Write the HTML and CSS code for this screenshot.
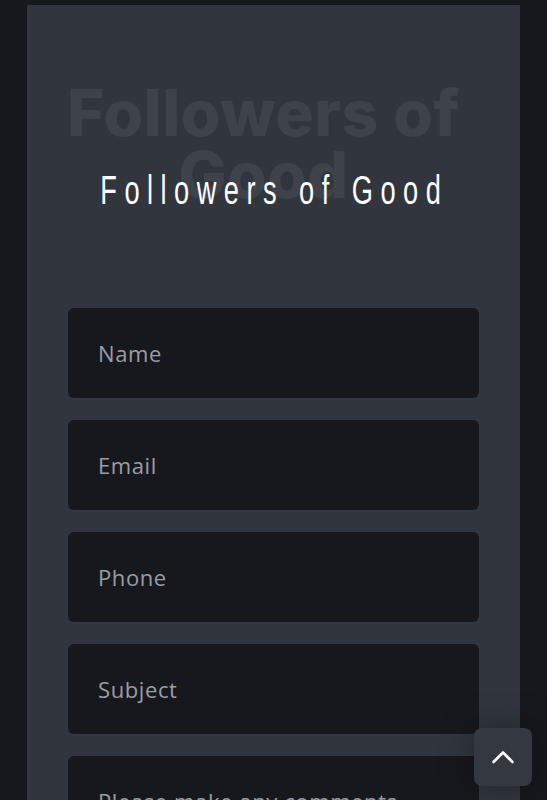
FILE: index.html
```html
<!DOCTYPE html>
<html lang="en">
<head>
    <meta charset="UTF-8">
    <meta name="viewport" content="width=device-width, initial-scale=1.0">
    <title>Followers of Good</title>
    <link rel="stylesheet" href="styles.css">
</head>
<body>

    <div class="page">
        <section class="contact">
            <div class="heading">
                <p class="heading-ghost">Followers of Good</p>
                <h2 class="heading-title"><span>Followers of Good</span></h2>
            </div>

            <form class="contact-form">
                <input type="text" class="field" placeholder="Name">
                <input type="email" class="field" placeholder="Email">
                <input type="tel" class="field" placeholder="Phone">
                <input type="text" class="field" placeholder="Subject">
                <textarea class="field field-message" placeholder="Please make any comments"></textarea>
            </form>
        </section>
    </div>

    <a href="#" class="to-top" aria-label="Back to top">
        <svg width="24" height="14" viewBox="0 0 24 14">
            <path d="M2.5 12 L12 2.5 L21.5 12" fill="none" stroke="#fff" stroke-width="2.6" stroke-linecap="round" stroke-linejoin="round"/>
        </svg>
    </a>

</body>
</html>
```

FILE: styles.css
```css
body {
    margin: 0;
    padding: 0;
    background-color: #15181d;
    font-family: "Open Sans", Arial, sans-serif;
}

.page {
    padding: 5px 27px 0 27px;
}

.contact {
    background-color: #31363e;
    padding: 77px 41px 40px 41px;
}

.heading {
    position: relative;
    text-align: center;
    margin-bottom: 102px;
}

.heading-ghost {
    margin: 0 10px 0 -10px;
    font-family: Inter, "Open Sans", sans-serif;
    font-weight: 800;
    font-size: 64px;
    line-height: 62px;
    letter-spacing: 0.5px;
    color: #3e434b;
}

/* condensed look: no Oswald offline, so squeeze a plain sans */
.heading-title {
    position: absolute;
    top: 88px;
    left: 0;
    right: 0;
    margin: 0;
    display: flex;
    justify-content: center;
    font-family: "Liberation Sans", Arial, sans-serif;
    font-weight: normal;
    font-size: 40px;
    line-height: 40px;
    color: #fff;
    white-space: nowrap;
}

.heading-title span {
    display: block;
    letter-spacing: 11px;
    padding-left: 3px;
    transform: scaleX(0.68);
}

.contact-form {
    display: flex;
    flex-direction: column;
    gap: 22px;
}

.field {
    display: block;
    box-sizing: border-box;
    width: 100%;
    height: 90px;
    padding: 0 30px;
    border: none;
    border-radius: 6px;
    background-color: #16181d;
    color: #e0e0e0;
    font-family: "Open Sans", Arial, sans-serif;
    font-size: 22px;
    letter-spacing: 0.6px;
    outline: none;
}

.field::placeholder {
    color: #9b9ea4;
}

.field-message {
    height: 200px;
    padding-top: 30px;
    resize: none;
}

.to-top {
    position: fixed;
    right: 15px;
    bottom: 14px;
    width: 58px;
    height: 58px;
    border-radius: 8px;
    background-color: #343941;
    box-shadow: 0 0 34px rgba(0, 0, 0, 0.35);
    display: flex;
    align-items: center;
    justify-content: center;
}
```
